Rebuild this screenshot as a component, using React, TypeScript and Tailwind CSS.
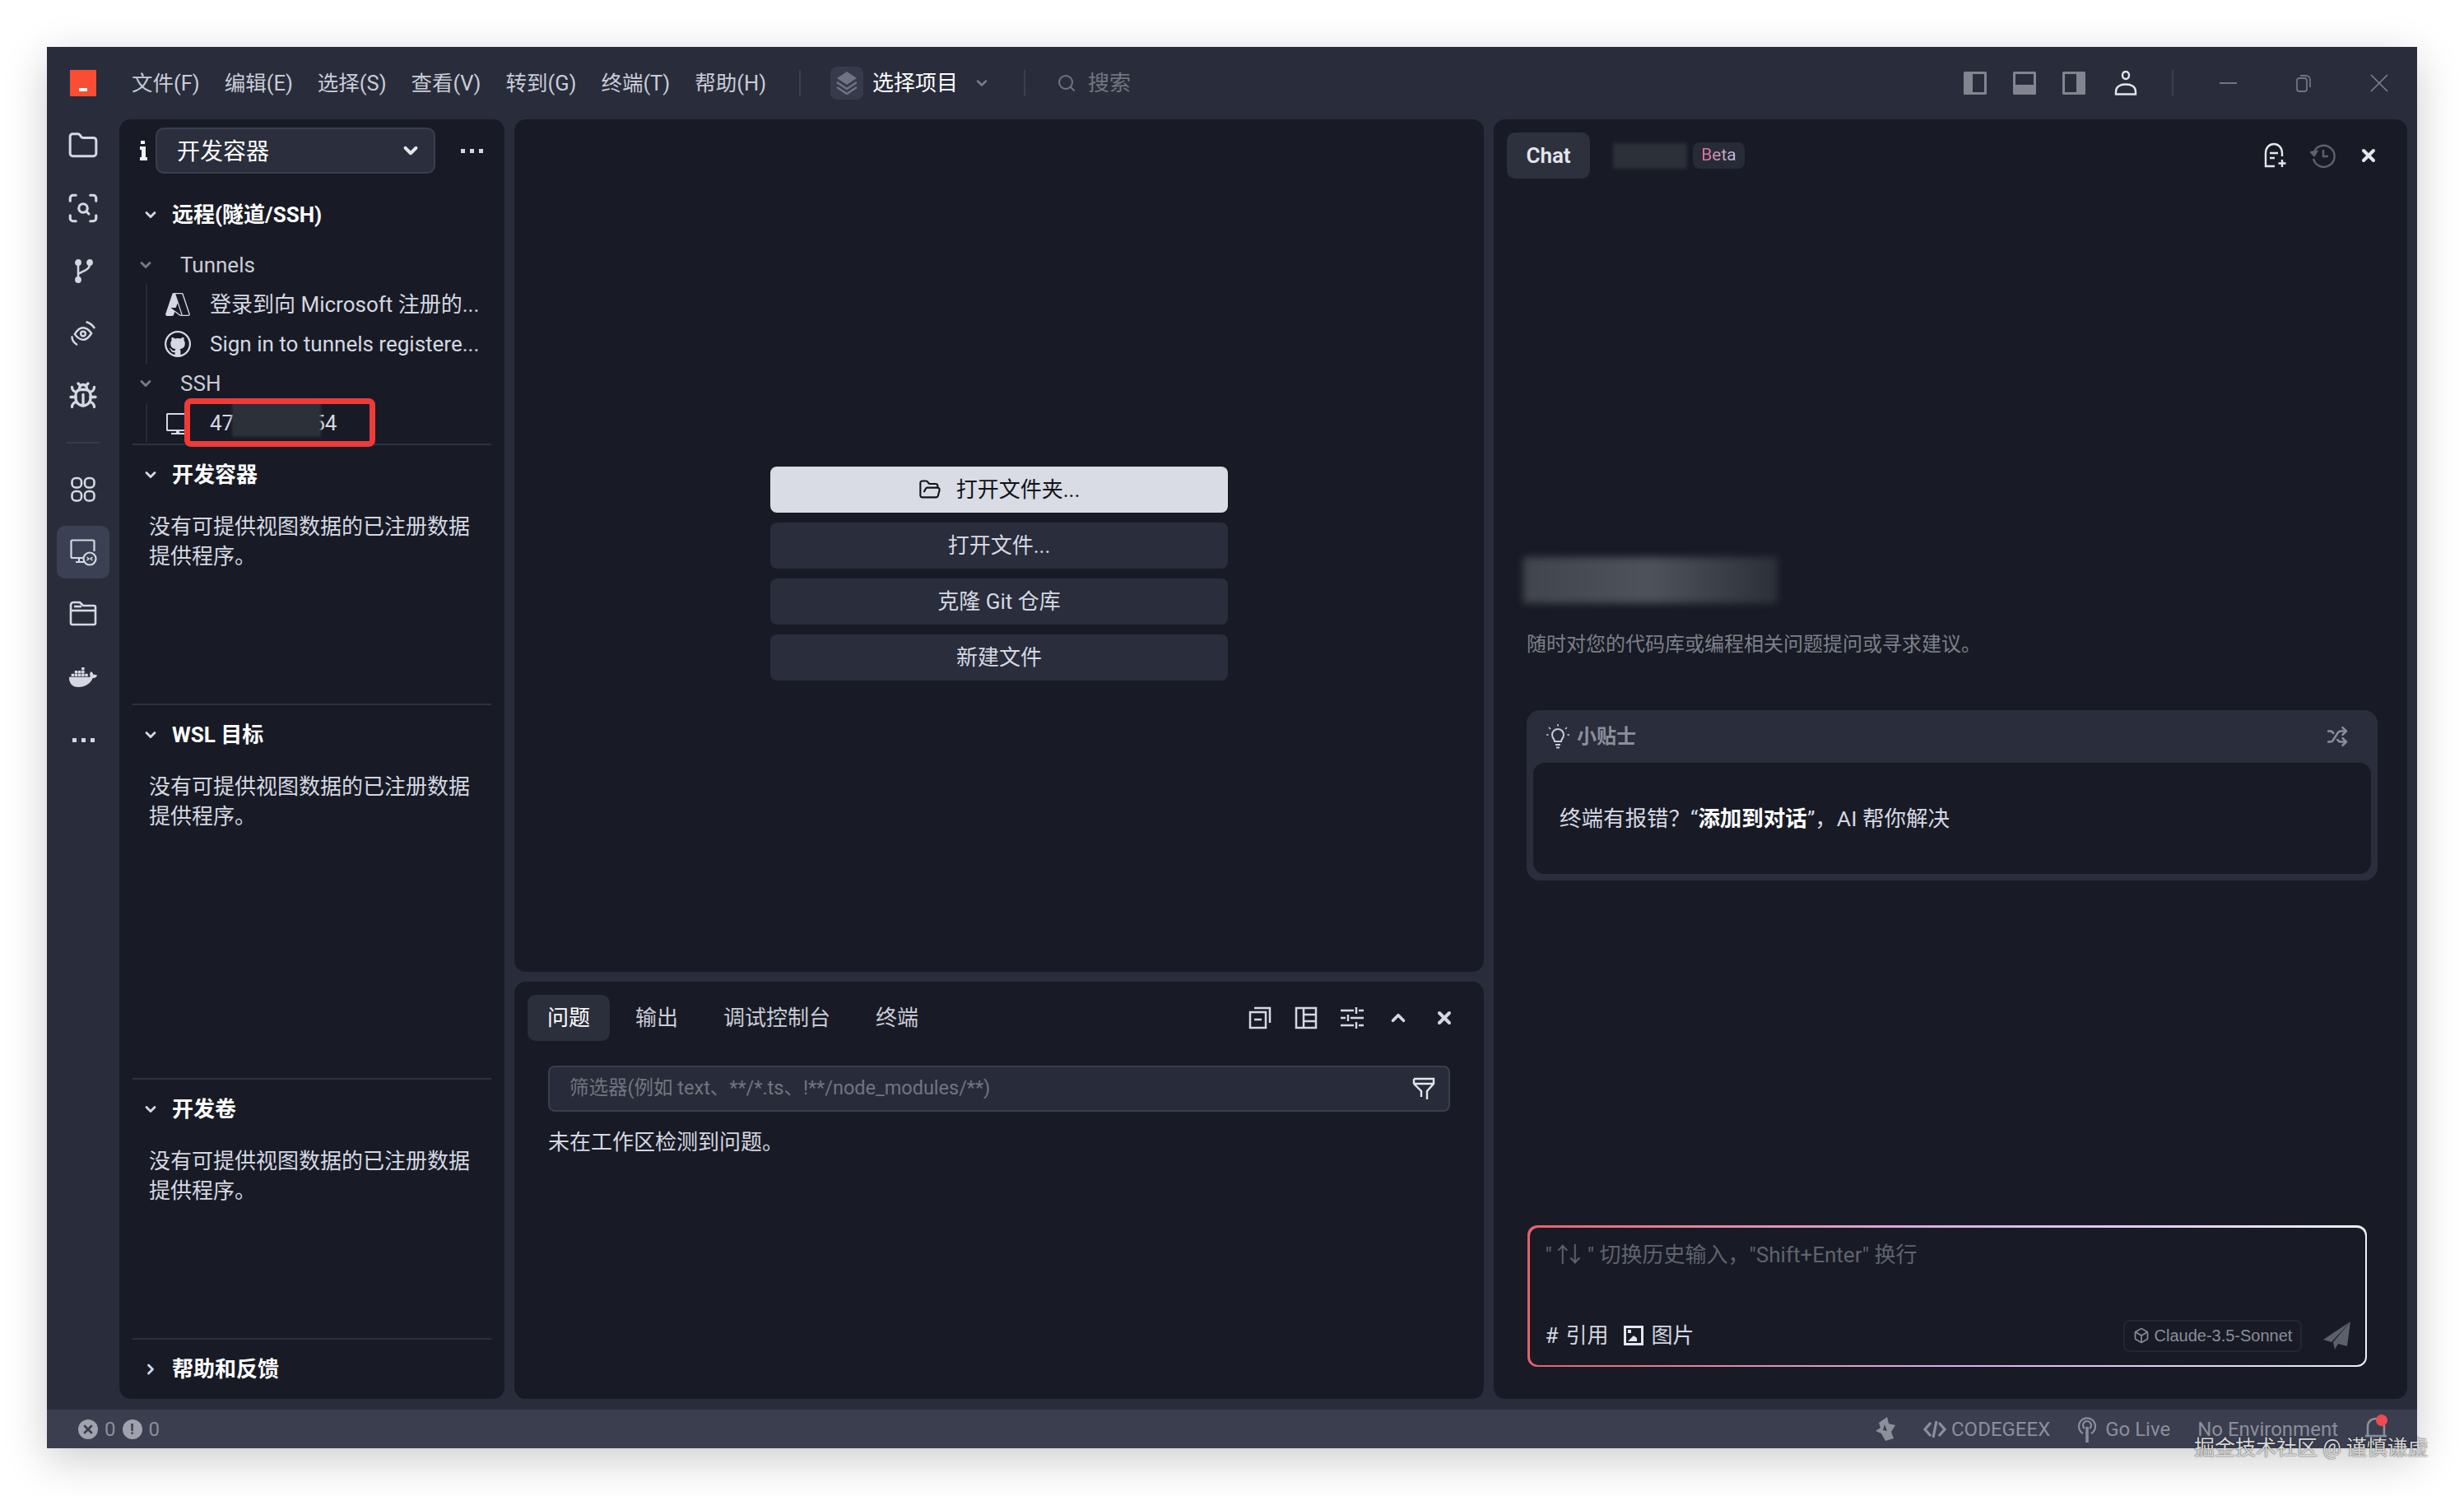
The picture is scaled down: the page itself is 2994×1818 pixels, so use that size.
import { Bug, ChevronDown, ChevronRight, ChevronUp, Folder, FolderOpen, Search, ScanSearch, Shuffle, X, Box } from "lucide-react";
import { VscAzure, VscGithub, VscVm } from "react-icons/vsc";
import { FaDocker } from "react-icons/fa";
import type { ReactNode } from "react";

const menus = ["文件(F)", "编辑(E)", "选择(S)", "查看(V)", "转到(G)", "终端(T)", "帮助(H)"];
const noData = "没有可提供视图数据的已注册数据提供程序。";

function ActivityItem({ children, active }: { children: ReactNode; active?: boolean }) {
  return (
    <div className={"flex h-16 w-16 items-center justify-center rounded-[10px] text-[#d5d8e2] " + (active ? "bg-[#3b4054]" : "")}>
      {children}
    </div>
  );
}

function Dots() {
  return (
    <div className="flex gap-[6px]">
      <div className="h-[5px] w-[5px] bg-[#d5d8e2]" />
      <div className="h-[5px] w-[5px] bg-[#d5d8e2]" />
      <div className="h-[5px] w-[5px] bg-[#d5d8e2]" />
    </div>
  );
}

function BranchIcon() {
  return (
    <svg width="32" height="32" viewBox="0 0 32 32" fill="none" stroke="currentColor" strokeWidth="2.6">
      <circle cx="10" cy="6" r="2.6" fill="currentColor" />
      <circle cx="10" cy="27" r="2.6" fill="currentColor" />
      <circle cx="24" cy="6" r="2.6" fill="currentColor" />
      <path d="M10 8v17M24 8c0 7-8 8-14 12" />
    </svg>
  );
}

function EyeArcIcon() {
  return (
    <svg width="36" height="36" viewBox="0 0 32 32" fill="none" stroke="currentColor" strokeWidth="2.2" strokeLinecap="round">
      <path d="M7 17c3-5 6-7 9-7s6 2 9 6c-3 5-6 7-9 7s-6-2-9-6z" />
      <circle cx="16" cy="16.5" r="2.6" />
      <path d="M20 4c3 1 6 3 8 6M4 20c0 3 2 6 5 8" />
    </svg>
  );
}

function GridIcon() {
  return (
    <svg width="32" height="34" viewBox="0 0 32 34" fill="none" stroke="currentColor" strokeWidth="2.6">
      <rect x="2.5" y="3" width="11.5" height="11.5" rx="4.5" />
      <rect x="18" y="3" width="11.5" height="11.5" rx="4.5" />
      <rect x="2.5" y="19" width="11.5" height="11.5" rx="4.5" />
      <rect x="18" y="19" width="11.5" height="11.5" rx="4.5" />
    </svg>
  );
}

function RemoteIcon() {
  return (
    <svg width="34" height="34" viewBox="0 0 34 34" fill="none" stroke="currentColor" strokeWidth="2.2">
      <path d="M17 24H4a1.5 1.5 0 0 1-1.5-1.5V4A1.5 1.5 0 0 1 4 2.500h25A1.500 1.500 0 0 1 30.500 4v12" />
      <path d="M8 29h10M12 24v5" />
      <circle cx="25" cy="25" r="7.500" />
      <path d="M21.500 23l2.500 2-2.500 2M28.500 23l-2.500 2 2.500 2" strokeWidth="1.600" />
    </svg>
  );
}

function FolderTabIcon() {
  return (
    <svg width="34" height="32" viewBox="0 0 34 32" fill="none" stroke="currentColor" strokeWidth="2.6" strokeLinejoin="round" className="-mt-1">
      <path d="M2 6a3 3 0 0 1 3-3h8l4 4h13a2 2 0 0 1 2 2v19a2 2 0 0 1-2 2H4a2 2 0 0 1-2-2z" />
      <path d="M2 13h30" />
      <path d="M6 8h9" />
    </svg>
  );
}

function LayoutIcon({ side }: { side: "left" | "bottom" | "right" }) {
  return (
    <svg width="28" height="28" viewBox="0 0 28 28">
      <rect width="28" height="28" rx="1.500" fill="#82858f" />
      {side === "left" && <rect x="11" y="3" width="14" height="22" fill="#292d3b" />}
      {side === "right" && <rect x="3" y="3" width="14" height="22" fill="#292d3b" />}
      {side === "bottom" && <rect x="3" y="3" width="22" height="13" fill="#292d3b" />}
    </svg>
  );
}

function PersonIcon() {
  return (
    <svg width="28" height="30" viewBox="0 0 28 30" fill="none" stroke="#e4e6ec" strokeWidth="2.400">
      <ellipse cx="14" cy="5.500" rx="4" ry="4.500" />
      <path d="M2 28.500v-3c0-6 5-9 12-9s12 3 12 9v3z" />
    </svg>
  );
}

function RestoreIcon() {
  return (
    <svg width="22" height="22" viewBox="0 0 22 22" fill="none" stroke="#70747f" strokeWidth="1.800">
      <rect x="3" y="5" width="12" height="16" rx="3" />
      <path d="M7 2h7a5 5 0 0 1 5 5v9" />
    </svg>
  );
}

function ThinCloseIcon() {
  return (
    <svg width="22" height="22" viewBox="0 0 22 22" stroke="#82858f" strokeWidth="1.500">
      <path d="M1 1l20 20M21 1L1 21" />
    </svg>
  );
}

function StackIcon() {
  return (
    <svg width="28" height="30" viewBox="0 0 28 30" fill="none">
      <path d="M14 1l12 8-12 8-12-8z" fill="#6f7383" />
      <path d="M2 14l12 8 12-8M2 20l12 8 12-8" stroke="#6f7383" strokeWidth="2.400" />
    </svg>
  );
}

function NewChatIcon() {
  return (
    <svg width="30" height="32" viewBox="0 0 30 32" fill="none" stroke="#e4e6ec" strokeWidth="2.400">
      <path d="M14 29H3V13C3 6 8 2 13 2s10 4 10 11v4" />
      <path d="M8 13h10M8 19h6" />
      <path d="M23 21v9M18.500 25.500h9" />
    </svg>
  );
}

function HistoryIcon() {
  return (
    <svg width="32" height="32" viewBox="0 0 32 32" fill="none" stroke="#5d616c" strokeWidth="2.400">
      <path d="M5 11A13 13 0 1 1 4 20" />
      <path d="M16 9v8h6" />
      <path d="M1 12l4 4 3-5z" fill="#5d616c" />
    </svg>
  );
}

function BulbIcon() {
  return (
    <svg width="28" height="30" viewBox="0 0 28 30" fill="none" stroke="#c9ccd6" strokeWidth="2">
      <path d="M10 21c0-3-3-4-3-8a7 7 0 0 1 14 0c0 4-3 5-3 8z" />
      <path d="M11 25h6M12 28.500h4" />
      <path d="M14 0v2.500M3 4l2 2M25 4l-2 2M0 13h2.500M25.500 13H28" strokeWidth="1.600" />
    </svg>
  );
}

function FilterIcon() {
  return (
    <svg width="28" height="28" viewBox="0 0 28 28" fill="none" stroke="#e4e6ec" strokeWidth="2.400">
      <path d="M2 2h24v6l-8 9v10M2 8l9 9v7M2 2v6M2 8h24" />
    </svg>
  );
}

function PanelIcons() {
  return (
    <div className="flex text-[#d5d8e2]">
      <div className="flex h-14 w-14 items-center justify-center">
        <svg width="28" height="28" viewBox="0 0 28 28" fill="none" stroke="currentColor" strokeWidth="2.500">
          <rect x="2" y="7" width="19" height="19" />
          <path d="M7 2h19v18M7 16h9" />
        </svg>
      </div>
      <div className="flex h-14 w-14 items-center justify-center">
        <svg width="28" height="28" viewBox="0 0 28 28" fill="none" stroke="currentColor" strokeWidth="2.500">
          <rect x="2" y="2" width="24" height="24" />
          <path d="M11 2v24M11 10h15M11 18h15" />
        </svg>
      </div>
      <div className="flex h-14 w-14 items-center justify-center">
        <svg width="30" height="28" viewBox="0 0 30 28" fill="none" stroke="currentColor" strokeWidth="2.500">
          <path d="M1 5h16M23 5h6M1 14h6M13 14h16M1 23h16M23 23h6" />
          <path d="M20 1v8M10 10v8M20 19v8" />
        </svg>
      </div>
      <div className="flex h-14 w-14 items-center justify-center">
        <ChevronUp size={26} strokeWidth={3.4} />
      </div>
      <div className="flex h-14 w-14 items-center justify-center">
        <X size={24} strokeWidth={4} />
      </div>
    </div>
  );
}

function SectionHead({ title, open = true }: { title: string; open?: boolean }) {
  return (
    <div className="mt-3.5 flex h-11 items-center gap-4 pl-3 text-[26px] font-bold text-white">
      {open ? <ChevronDown size={20} strokeWidth={3.4} className="text-[#d5d8e2]" /> : <ChevronRight size={20} strokeWidth={3.4} className="text-[#c9dbef]" />}
      <span>{title}</span>
    </div>
  );
}

function EmptySection({ title, height }: { title: string; height: string }) {
  return (
    <div className={"mx-4 border-t-2 border-[#2d3140] " + height}>
      <SectionHead title={title} />
      <p className="mt-[23px] w-[412px] pl-5 text-[26px] leading-9 text-[#d5d8e2]">{noData}</p>
    </div>
  );
}

function TreeHead({ title, first }: { title: string; first?: boolean }) {
  return (
    <div className={"flex h-12 items-center gap-8 pl-[22px] text-[26px] text-[#c9ccd6] " + (first ? "mt-[15px]" : "")}>
      <ChevronDown size={20} strokeWidth={3.4} className="text-[#777b87]" />
      <span>{title}</span>
    </div>
  );
}

function TreeRow({ icon, children }: { icon: ReactNode; children?: ReactNode }) {
  return (
    <div className="flex h-12 items-center gap-[23px] pl-[21px] text-[26px] whitespace-nowrap text-[#d5d8e2]">
      <div className="flex w-8 justify-center">{icon}</div>
      {children}
    </div>
  );
}

function StartButton({ children, primary }: { children: ReactNode; primary?: boolean }) {
  return (
    <div className={"flex h-14 items-center justify-center gap-[18px] rounded-lg text-[26px] " + (primary ? "bg-[#d9dce4] text-[#111318]" : "bg-[#292d3c] text-[#d5d8e2]")}>
      {children}
    </div>
  );
}

export default function App() {
  return (
    <div className="relative h-[1818px] w-[2994px] overflow-hidden bg-white pt-[57px] pl-[57px] font-['Roboto','Noto_Sans_CJK_SC',sans-serif]">
      <div className="flex h-[1703px] w-[2880px] flex-col bg-[#292d3b] shadow-[0_14px_50px_rgba(0,0,0,0.2)]">
        {/* title bar */}
        <header className="flex h-[88px] shrink-0 items-center text-[26px] text-[#c8ccd8]">
          <div className="ml-7 flex h-8 w-8 items-end justify-center bg-[#f94d34] pb-1.5">
            <div className="h-1 w-2.5 bg-white" />
          </div>
          <nav className="ml-[43px] flex gap-[30px] text-[25.500px]">
            {menus.map((m) => (
              <span key={m}>{m}</span>
            ))}
          </nav>
          <div className="ml-[40px] h-8 w-0.5 bg-[#3c404e]" />
          <div className="ml-[36px] flex h-10 w-10 items-center justify-center rounded-lg bg-[#363a4a]">
            <StackIcon />
          </div>
          <span className="ml-[11px] text-white">选择项目</span>
          <ChevronDown size={20} strokeWidth={3} className="ml-[19px] text-[#777b87]" />
          <div className="ml-[41px] h-8 w-0.5 bg-[#3c404e]" />
          <Search size={24} className="ml-[38px] text-[#71757f]" />
          <span className="ml-[14px] text-[#71757f]">搜索</span>
          <div className="ml-auto flex items-center gap-8">
            <LayoutIcon side="left" />
            <LayoutIcon side="bottom" />
            <LayoutIcon side="right" />
            <div className="ml-[3px]">
              <PersonIcon />
            </div>
          </div>
          <div className="ml-[42px] h-8 w-0.5 bg-[#3c404e]" />
          <div className="ml-[56px] h-0.5 w-[21px] bg-[#70747f]" />
          <div className="ml-[70px]">
            <RestoreIcon />
          </div>
          <div className="mr-[35px] ml-[70px]">
            <ThinCloseIcon />
          </div>
        </header>

        <div className="flex min-h-0 flex-1">
          {/* activity bar */}
          <aside className="flex w-[88px] shrink-0 flex-col items-center gap-3">
            <ActivityItem>
              <Folder size={38} strokeWidth={1.9} />
            </ActivityItem>
            <ActivityItem>
              <ScanSearch size={42} strokeWidth={1.8} />
            </ActivityItem>
            <ActivityItem>
              <BranchIcon />
            </ActivityItem>
            <ActivityItem>
              <EyeArcIcon />
            </ActivityItem>
            <ActivityItem>
              <Bug size={36} strokeWidth={2.2} />
            </ActivityItem>
            <div className="my-3 h-0.5 w-10 bg-[#383c4a]" />
            <ActivityItem>
              <GridIcon />
            </ActivityItem>
            <ActivityItem active>
              <RemoteIcon />
            </ActivityItem>
            <ActivityItem>
              <FolderTabIcon />
            </ActivityItem>
            <ActivityItem>
              <FaDocker size={34} />
            </ActivityItem>
            <ActivityItem>
              <Dots />
            </ActivityItem>
          </aside>

          {/* explorer */}
          <section className="flex w-[468px] shrink-0 flex-col rounded-[14px] bg-[#181b25]">
            <div className="mt-2.5 flex h-14 items-center pl-[25px]">
              <svg width="9" height="24" viewBox="0 0 9 24" fill="#f1f2f5" className="shrink-0">
                <path d="M1 0h5v4H1zM0 7h7v13h2v4H0v-4h2v-9H0z" />
              </svg>
              <div className="ml-[10px] flex h-14 w-[340px] items-center justify-between rounded-[10px] border-2 border-[#3a3e4e] bg-[#2a2e3d] pr-[15px] pl-6 text-[28px] text-white">
                <span className="mt-[3px]">开发容器</span>
                <ChevronDown size={26} strokeWidth={3.6} className="text-[#e4e6ec]" />
              </div>
              <div className="ml-[31px]">
                <Dots />
              </div>
            </div>

            <div className="mt-7 flex h-11 items-center gap-4 pl-7 text-[26px] font-bold text-white">
              <ChevronDown size={20} strokeWidth={3.4} className="text-[#d5d8e2]" />
              远程(隧道/SSH)
            </div>
            <TreeHead title="Tunnels" first />
            <div className="ml-8 border-l-2 border-[#272b37]">
              <TreeRow icon={<VscAzure size={32} />}>登录到向 Microsoft 注册的...</TreeRow>
              <TreeRow icon={<VscGithub size={32} />}>Sign in to tunnels registere...</TreeRow>
            </div>
            <TreeHead title="SSH" />
            <div className="ml-8 border-l-2 border-[#272b37]">
              <TreeRow icon={<VscVm size={32} />}>
                <div className="relative w-[140px]">
                  47<span className="ml-[96px]">54</span>
                  <div className="absolute top-[-9px] left-[27px] h-[45px] w-[108px] bg-[#2c3039] blur-[1.5px]" />
                  <div className="absolute top-[-11px] left-[-31px] h-[59px] w-[232px] rounded-lg border-[7px] border-[#ef3a3a]" />
                </div>
              </TreeRow>
            </div>

            <EmptySection title="开发容器" height="mt-px h-[316px]" />
            <EmptySection title="WSL 目标" height="h-[455px]" />
            <EmptySection title="开发卷" height="h-[316px]" />
            <div className="mx-4 border-t-2 border-[#2d3140]">
              <SectionHead title="帮助和反馈" open={false} />
            </div>
          </section>

          {/* editor + panel */}
          <main className="ml-3 flex w-[1178px] shrink-0 flex-col gap-3">
            <div className="h-[1036px] rounded-[14px] bg-[#181b25] pt-[422px]">
              <div className="mx-auto flex w-[556px] flex-col gap-3">
                <StartButton primary>
                  <FolderOpen size={28} strokeWidth={1.8} />
                  打开文件夹...
                </StartButton>
                <StartButton>打开文件...</StartButton>
                <StartButton>克隆 Git 仓库</StartButton>
                <StartButton>新建文件</StartButton>
              </div>
            </div>
            <div className="flex-1 rounded-[14px] bg-[#181b25] pt-4">
              <div className="flex items-center justify-between pr-5 pl-4 text-[26px] text-[#c9ccd6]">
                <div className="flex gap-[7px]">
                  <span className="flex h-14 items-center rounded-[10px] bg-[#2b2f3b] px-6 text-white">问题</span>
                  <span className="flex h-14 items-center px-6">输出</span>
                  <span className="flex h-14 items-center px-6">调试控制台</span>
                  <span className="flex h-14 items-center px-6">终端</span>
                </div>
                <PanelIcons />
              </div>
              <div className="mx-[41px] mt-[30px] flex h-14 items-center justify-between rounded-lg border-2 border-[#3a3e4d] bg-[#282c3a] pr-[16px] pl-6 text-[23.500px] text-[#71757f]">
                <span>筛选器(例如 text、**/*.ts、!**/node_modules/**)</span>
                <FilterIcon />
              </div>
              <p className="mt-[19px] ml-[41px] text-[26px] leading-9 text-[#d5d8e2]">未在工作区检测到问题。</p>
            </div>
          </main>

          {/* chat */}
          <section className="ml-3 flex w-[1110px] shrink-0 flex-col rounded-[14px] bg-[#181b25]">
            <div className="mt-4 flex h-14 items-center pr-[35px] pl-4">
              <div className="flex h-14 w-[101px] items-center justify-center rounded-[10px] bg-[#2d313e] text-[26px] font-semibold text-[#e4e6ec]">Chat</div>
              <div className="ml-7 h-[31px] w-[90px] bg-[#2c3039] blur-[2px]" />
              <div className="ml-[7px] flex h-8 w-[63px] items-center justify-center rounded-lg bg-[#272b38] text-[21px]">
                <span className="bg-gradient-to-r from-[#e0668f] to-[#b9c4e8] bg-clip-text text-transparent">Beta</span>
              </div>
              <div className="ml-auto flex items-center gap-[27px]">
                <NewChatIcon />
                <HistoryIcon />
                <X size={24} strokeWidth={4} className="text-[#e4e6ec]" />
              </div>
            </div>

            <div className="mt-[460px] ml-9 h-14 w-[309px] bg-gradient-to-r from-[#41454e] via-[#4e525a] to-[#2c3039] blur-[5px]" />
            <p className="mt-[32px] ml-10 text-[24px] leading-9 text-[#7c8089]">随时对您的代码库或编程相关问题提问或寻求建议。</p>

            <div className="mt-[62px] ml-10 w-[1034px] rounded-2xl bg-[#292d3c]">
              <div className="flex h-16 items-center justify-between pr-9 pl-6 text-[24px] font-bold text-[#8b8f9c]">
                <div className="flex items-center gap-[9px]">
                  <BulbIcon />
                  小贴士
                </div>
                <Shuffle size={26} strokeWidth={2.4} />
              </div>
              <div className="mx-2 mb-2 flex h-[135px] items-center rounded-[14px] bg-[#181b25] pl-8 text-[26.500px] text-[#d5d8e2]">
                <span>
                  终端有报错？“<b className="text-white">添加到对话</b>”，AI 帮你解决
                </span>
              </div>
            </div>

            <div className="mt-auto mb-[39px] ml-[41px] h-[172px] w-[1020px] rounded-[12px] bg-gradient-to-r from-[#e8606a] via-[#d9b0ea] to-[#efeeff] p-[2.500px]">
              <div className="flex h-full flex-col rounded-[10px] bg-[#181b25] pt-[15px] pr-[17px] pb-[16px] pl-[19px]">
                <p className="text-[26px] leading-9 text-[#5f636e]">
                  "<span className="tracking-[-11px]">↑↓</span>&nbsp;&nbsp;" 切换历史输入，"Shift+Enter" 换行
                </p>
                <div className="mt-auto flex items-center text-[26px] text-[#d5d8e2]">
                  <span>#</span>
                  <span className="ml-[9px]">引用</span>
                  <svg width="24" height="24" viewBox="0 0 24 24" fill="none" className="ml-[18px]">
                    <rect x="1.500" y="1.500" width="21" height="21" stroke="#e4e6ec" strokeWidth="3" />
                    <path d="M5 19l7-7 4 3v4z" fill="#e4e6ec" />
                    <rect x="5" y="5" width="4" height="4" fill="#e4e6ec" />
                  </svg>
                  <span className="ml-[10px]">图片</span>
                  <div className="ml-auto flex h-[39px] w-[217px] items-center gap-[6px] rounded-lg border-2 border-[#232733] pl-[10px] font-['Liberation_Sans',sans-serif] text-[20px] text-[#8a8e99]">
                    <Box size={20} />
                    Claude-3.5-Sonnet
                  </div>
                  <svg width="34" height="34" viewBox="0 0 34 34" className="ml-[26px]" fill="#5c606b">
                    <path d="M33 0L0 22l10 3z" />
                    <path d="M33 0L12 25l2 9 4-7 11 3z" />
                  </svg>
                </div>
              </div>
            </div>
          </section>
        </div>

        {/* status bar */}
        <footer className="mt-[13px] flex h-[47px] shrink-0 items-center bg-[#3a3e4f] pr-[36px] pl-[38px] text-[24px] text-[#8b8f9c]">
          <div className="flex h-6 w-6 items-center justify-center rounded-full bg-[#a0a3ae] text-[#3a3e4f]">
            <X size={16} strokeWidth={4} />
          </div>
          <span className="ml-[8px]">0</span>
          <div className="ml-[8px] flex h-6 w-6 items-center justify-center rounded-full bg-[#a0a3ae] text-[18px] font-bold text-[#3a3e4f]">!</div>
          <span className="ml-[8px]">0</span>
          <div className="ml-auto flex items-center">
            <svg width="28" height="32" viewBox="0 0 28 32" fill="#8b8f9c">
              <path d="M6 8l10-7 2 8 8 2-5 8 3 8-10 3-5-9-7-3 6-4z" />
              <path d="M13 10l3 8-5-1z" fill="#3a3e4f" />
            </svg>
            <svg width="28" height="28" viewBox="0 0 28 28" fill="none" stroke="#8b8f9c" strokeWidth="3.200" className="ml-[32px]">
              <path d="M9 6l-7 8 7 8M19 6l7 8-7 8M16 4l-4 20" />
            </svg>
            <span className="ml-[6px]">CODEGEEX</span>
            <svg width="22" height="34" viewBox="0 0 22 34" fill="none" stroke="#8b8f9c" strokeWidth="2.200" className="ml-[34px]">
              <path d="M6 22a10 10 0 1 1 10 0" />
              <path d="M8 16a5 5 0 1 1 6 0" />
              <path d="M11 14v19" strokeWidth="3.500" />
            </svg>
            <span className="ml-[11px]">Go Live</span>
            <span className="ml-[33px]">No Environment</span>
            <div className="relative ml-[32px]">
              <svg width="28" height="34" viewBox="0 0 28 34" fill="none" stroke="#8b8f9c" strokeWidth="2.600">
                <path d="M4 25V14C4 8 8 4 14 4s10 4 10 10v11zM1 25h26M10 30h8" />
              </svg>
              <div className="absolute -top-px right-0 h-3.5 w-3.5 rounded-full bg-[#ef4a50]" />
            </div>
          </div>
        </footer>
      </div>

      <div className="absolute top-[1742px] left-[2666px] text-[25px] leading-9 whitespace-nowrap text-[#d8d8d8] [text-shadow:0_0_1.5px_rgba(0,0,0,0.9)]">
        掘金技术社区 @ 谨慎谦虚
      </div>
    </div>
  );
}
